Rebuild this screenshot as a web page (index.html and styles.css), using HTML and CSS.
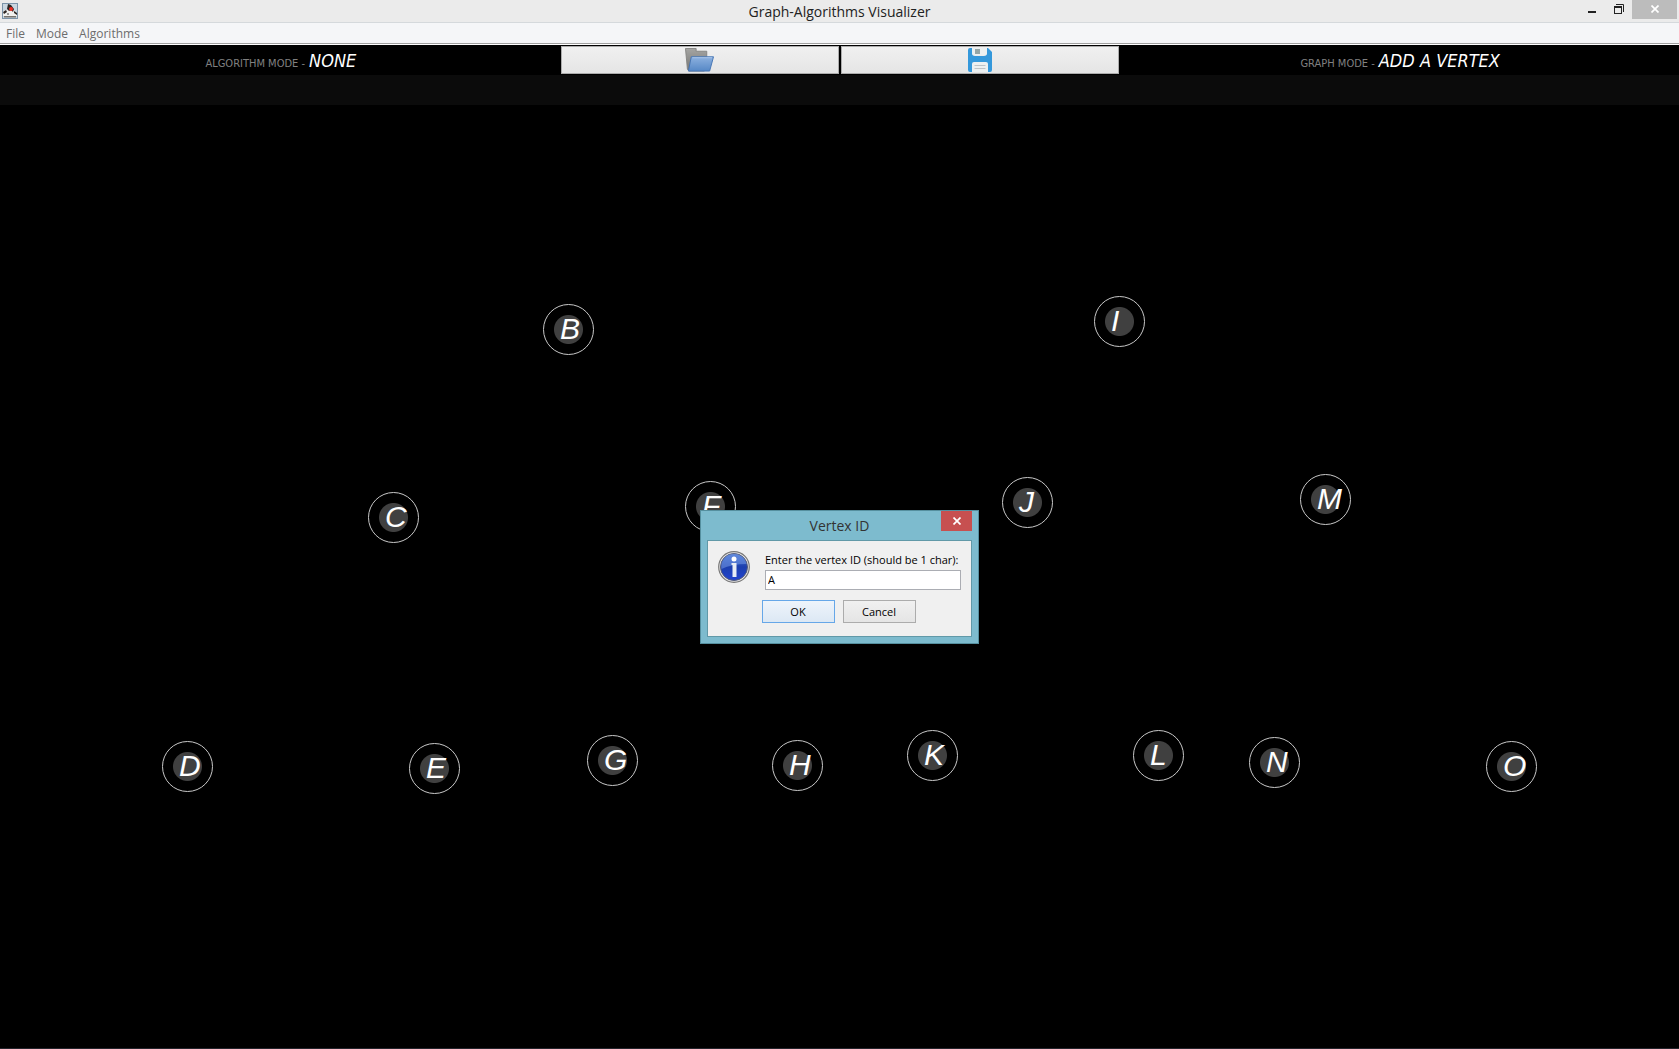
FILE: index.html
```html
<!DOCTYPE html>
<html lang="en">
<head>
<meta charset="utf-8">
<title>Graph-Algorithms Visualizer</title>
<link rel="stylesheet" href="styles.css">
</head>
<body>
<header class="titlebar">
  <svg class="app-icon" viewBox="0 0 16 16" aria-hidden="true">
    <rect x=".5" y=".5" width="15" height="15" fill="#c9d6e0" stroke="#7b93a8"/>
    <path d="M1 8l4-1 2-3 4 1 2 4 2 1v3H1z" fill="#f1f1ef"/>
    <path d="M6 1l3 1 3 4-1 3-2-2-2 1-2-2zM1 9l3-2 1 2-3 2zM12 8l3 2v2l-3-2z" fill="#2b2522"/>
    <path d="M2 13h12v1.500H2z" fill="#77736d"/>
    <path d="M5 10h2v2H5z" fill="#9a9a98"/>
    <circle cx="9" cy="6" r="2" fill="#ee2b22"/>
  </svg>
  <h1 class="title">Graph-Algorithms Visualizer</h1>
  <div class="window-buttons">
    <button class="win-btn" aria-label="Minimize"><svg width="8" height="10" viewBox="0 0 8 10"><path d="M0 7h8v2H0z" fill="#222"/></svg></button>
    <button class="win-btn" aria-label="Restore"><svg width="10" height="10" viewBox="0 0 10 10"><path d="M2 .5h7.500V8" fill="none" stroke="#222"/><path d="M0 2h8v8H0zM1 4v5h6V4z" fill="#222" fill-rule="evenodd"/></svg></button>
    <button class="win-btn win-close" aria-label="Close"><svg width="8" height="8" viewBox="0 0 8 8"><path d="M.5.5l7 7M7.500.5l-7 7" stroke="#fff" stroke-width="1.700"/></svg></button>
  </div>
</header>
<nav class="menubar">
  <button class="menu">File</button>
  <button class="menu">Mode</button>
  <button class="menu">Algorithms</button>
</nav>
<section class="toolbar">
  <p class="mode"><span class="mode-name">ALGORITHM MODE -</span> <em class="mode-value">NONE</em></p>
  <div class="file-buttons">
    <button class="file-btn" aria-label="Open"><svg width="29" height="24" viewBox="0 0 30 26" preserveAspectRatio="none">
      <defs><linearGradient id="fb" x1="0" y1="0" x2="0" y2="1"><stop offset="0" stop-color="#8db1df"/><stop offset="1" stop-color="#5688c6"/></linearGradient><linearGradient id="fg" x1="0" y1="0" x2="0" y2="1"><stop offset="0" stop-color="#a5a5a3"/><stop offset="1" stop-color="#747472"/></linearGradient></defs>
      <path d="M.5.5h11v3h11V9L20 25H4L2.500 23z" fill="url(#fg)" stroke="#858583"/>
      <path d="M6.500 9.500h23l-4 15.500h-22z" fill="url(#fb)" stroke="#4474b4"/>
      <path d="M7.500 10.500h20.500" stroke="#a9c5ea"/>
    </svg></button>
    <button class="file-btn" aria-label="Save"><svg width="24" height="24" viewBox="0 0 24 24">
      <path d="M2 0h2v5a3 3 0 0 0 3 3h9a3 3 0 0 0 3-3V0h1l4 4v18a2 2 0 0 1-2 2H2a2 2 0 0 1-2-2V2a2 2 0 0 1 2-2z" fill="#3498db"/>
      <path d="M4 0h15v5a2 2 0 0 1-2 2H6a2 2 0 0 1-2-2z" fill="#ecf0f1"/>
      <rect x="7" y="1" width="5" height="5" fill="#95a5a6"/>
      <path d="M4 24v-8a2 2 0 0 1 2-2h12a2 2 0 0 1 2 2v8z" fill="#ecf0f1"/>
      <path d="M6.500 17.500h11M6.500 20.500h11" stroke="#bdc3c7" stroke-width="1.200"/>
    </svg></button>
  </div>
  <p class="mode"><span class="mode-name">GRAPH MODE -</span> <em class="mode-value">ADD A VERTEX</em></p>
</section>
<div class="info-strip"></div>
<main class="canvas">
  <div class="vertex" style="left:543px;top:199px">B</div>
  <div class="vertex" style="left:1094px;top:191px">I</div>
  <div class="vertex" style="left:368px;top:387px">C</div>
  <div class="vertex" style="left:685px;top:376px">F</div>
  <div class="vertex" style="left:1002px;top:372px">J</div>
  <div class="vertex" style="left:1300px;top:369px">M</div>
  <div class="vertex" style="left:162px;top:636px">D</div>
  <div class="vertex" style="left:409px;top:638px">E</div>
  <div class="vertex" style="left:587px;top:630px">G</div>
  <div class="vertex" style="left:772px;top:635px">H</div>
  <div class="vertex" style="left:907px;top:625px">K</div>
  <div class="vertex" style="left:1133px;top:625px">L</div>
  <div class="vertex" style="left:1249px;top:632px">N</div>
  <div class="vertex" style="left:1486px;top:636px">O</div>
  <div class="dialog-layer">
    <form class="dialog" role="dialog" aria-labelledby="dialog-title">
      <div class="dialog-head">
        <h2 class="dialog-title" id="dialog-title">Vertex ID</h2>
        <button type="button" class="dialog-close" aria-label="Close"><svg width="8" height="8" viewBox="0 0 8 8"><path d="M.5.5l7 7M7.500.5l-7 7" stroke="#fff" stroke-width="1.700"/></svg></button>
      </div>
      <div class="dialog-body">
        <div class="prompt">
          <svg width="32" height="32" viewBox="0 0 32 32" aria-hidden="true">
            <defs><linearGradient id="ib" x1="0" y1="0" x2="0" y2="1"><stop offset="0" stop-color="#3f6fd0"/><stop offset=".5" stop-color="#1c3fae"/><stop offset="1" stop-color="#2344cf"/></linearGradient></defs>
            <circle cx="16" cy="16" r="15.300" fill="#e8e8e8" stroke="#777" stroke-width="1.200"/>
            <circle cx="16" cy="16" r="13.500" fill="url(#ib)" stroke="#555c78"/>
            <path d="M3.500 18A12.700 12.700 0 0 1 28.500 13Q14 13 3.500 18z" fill="#7ea2ea" opacity=".5"/>
            <circle cx="16" cy="8" r="2.500" fill="#fff"/>
            <path d="M13.500 12h5v14h-4V14h-1z" fill="#e9edf5"/>
          </svg>
          <div class="field">
            <label class="field-label" for="vertex-id">Enter the vertex ID (should be 1 char):</label>
            <input class="field-input" id="vertex-id" type="text" value="A">
          </div>
        </div>
        <div class="actions">
          <button type="submit" class="btn btn-default">OK</button>
          <button type="button" class="btn">Cancel</button>
        </div>
      </div>
    </form>
  </div>
</main>
</body>
</html>
```
FILE: styles.css
```css
* { box-sizing: border-box; }

body {
  margin: 0;
  min-height: 100vh;
  display: flex;
  flex-direction: column;
  background: #000;
  font-family: "Open Sans", "Noto Sans", sans-serif;
}

button {
  margin: 0;
  padding: 0;
  border: 0;
  background: none;
  font-family: inherit;
}

svg { display: block; }

.titlebar {
  display: grid;
  grid-template-columns: 1fr auto 1fr;
  height: 23px;
  padding: 0 2px;
  background: #ebebeb;
  border-bottom: 1px solid #d5d9dc;
}

.app-icon { width: 16px; height: 16px; margin-top: 3px; }

.title {
  margin: 0;
  font-size: 14px;
  line-height: 24px;
  font-weight: 400;
  color: #222;
}

.window-buttons { display: flex; justify-content: flex-end; align-items: flex-start; }

.win-btn {
  display: flex;
  justify-content: center;
  width: 27px;
  height: 19px;
  padding-top: 4px;
}

.win-close { width: 45px; padding-top: 5px; background: #bcbcbc; }

.menubar {
  display: flex;
  gap: 11px;
  height: 22px;
  padding: 0 6px;
  background: #f5f6f8;
  border-bottom: 1px solid #fff;
  box-shadow: inset 0 -1px #a0a0a0;
}

.menu { font-size: 12px; line-height: 20px; color: #6d6d6d; }

.toolbar {
  display: grid;
  grid-template-columns: repeat(3, 1fr);
  grid-template-rows: 30px;
  background: #000;
}

.mode {
  margin: 0;
  display: flex;
  justify-content: center;
  align-items: baseline;
  gap: 4px;
  padding-left: 2px;
  line-height: 32px;
  font-family: "DejaVu Sans Condensed", "DejaVu Sans", sans-serif;
}

.mode-name { font-size: 11px; color: #808080; }
.mode-value { font-size: 18px; color: #fff; }

.file-buttons { display: grid; grid-template-columns: 1fr 1fr; gap: 2px; padding: 1px 0 1px 1px; }

.file-btn {
  display: flex;
  align-items: center;
  justify-content: center;
  border: 1px solid #acacac;
  background: linear-gradient(#f0f0f0, #e5e5e5);
}

.info-strip { height: 30px; background: #0b0b0b; }

.canvas {
  position: relative;
  flex: 1;
  min-height: 720px;
  border-bottom: 1px solid #24242c;
}

.vertex {
  position: absolute;
  width: 51px;
  height: 51px;
  padding-left: 16px;
  border: 1px solid #c8c8c8;
  border-radius: 50%;
  background: radial-gradient(circle, #404040 14px, transparent 15px);
  font: italic 30px/48px "Liberation Sans", Arial, sans-serif;
  color: #fff;
}

.dialog-layer { position: absolute; inset: 0; display: grid; place-items: center; }

.dialog {
  width: 279px;
  padding: 0 6px 6px;
  border: 1px solid #558f9f;
  background: #7dbbce;
}

.dialog-head { display: grid; grid-template-columns: 1fr auto 1fr; height: 29px; }

.dialog-title {
  grid-column: 2;
  margin: 0;
  font-size: 14px;
  line-height: 30px;
  font-weight: 400;
  color: #333;
}

.dialog-close {
  display: flex;
  align-items: center;
  justify-content: center;
  justify-self: end;
  width: 31px;
  height: 20px;
  background: #c75050;
}

.dialog-body {
  padding: 10px;
  border: 1px solid #6199a8;
  background: #f0f0f0;
}

.prompt { display: flex; justify-content: space-between; }

.field { display: flex; flex-direction: column; gap: 3px; width: 196px; }

.field-label { padding-top: 1px; font-size: 11px; line-height: 15px; white-space: nowrap; color: #000; }

.field-input {
  width: 196px;
  height: 20px;
  padding: 0 2px;
  border: 1px solid #abadb3;
  background: #fff;
  font-family: inherit;
  font-size: 11px;
  color: #000;
}

.actions { display: flex; justify-content: center; gap: 8px; padding: 10px 2px 3px 0; }

.btn {
  width: 73px;
  height: 23px;
  border: 1px solid #acacac;
  background: linear-gradient(#f0f0f0, #e5e5e5);
  font-size: 11px;
  color: #000;
}

.btn-default { border-color: #66a7e8; background: linear-gradient(#eef4fb, #dce8f4); }
```
